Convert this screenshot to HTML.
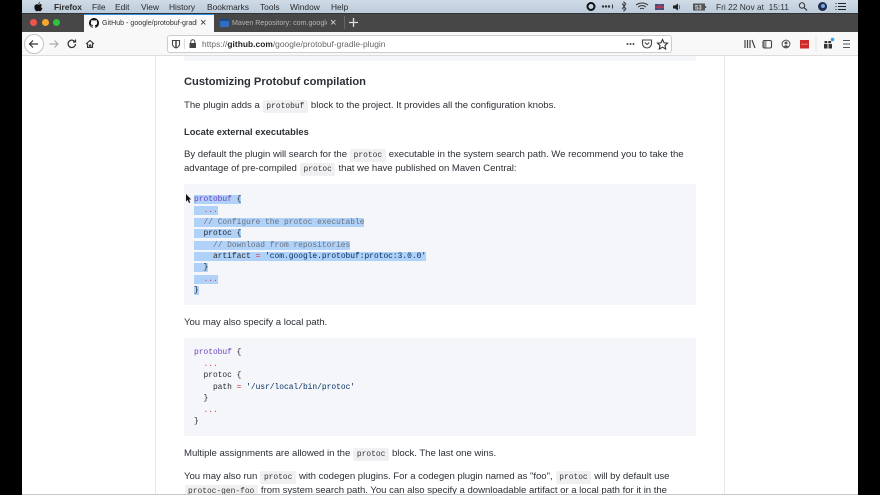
<!DOCTYPE html>
<html><head><meta charset="utf-8">
<style>
html,body{margin:0;padding:0;background:#000;width:880px;height:495px;overflow:hidden}
*{box-sizing:border-box}
#s{position:absolute;left:22px;top:0;width:836px;height:495px;background:#fff;overflow:hidden}
#w{position:absolute;left:-22px;top:0;width:880px;height:495px;filter:blur(.35px)}
.a{position:absolute;white-space:nowrap}
.t{position:absolute;white-space:nowrap;font:9.6px/14px "Liberation Sans",sans-serif;color:#2b3036;letter-spacing:-.03px}
.c{font:7.9px/12px "Liberation Mono",monospace;background:#f0f0f2;border-radius:2px;padding:2px 3.5px;color:#333;margin:0 .5px;letter-spacing:0}
.m{position:absolute;top:1px;font:8.4px/12px "Liberation Sans",sans-serif;color:#2a2a2a;white-space:nowrap}
.l{position:absolute;left:194px;white-space:pre;font:7.9px/11.45px "Liberation Mono",monospace;color:#24292e;height:11.45px}
.h{background:#b0d1f8}
.p{color:#6f42c1}.r{color:#d73a49}.g{color:#6a737d}.b{color:#032f62}
</style></head><body>
<div id="s"><div id="w">
<!-- menu bar -->
<div class="a" style="left:0;top:0;width:880px;height:13px;background:linear-gradient(#cfdbe6,#bccbdb)"></div>
<svg class="a" style="left:34px;top:2px" width="9" height="10" viewBox="0 0 9 10"><path d="M6 0C5.900 1 5.100 1.900 4.300 1.900 4.300 .9 5.100.2 6 0ZM4.400 2.500C5 2.500 5.500 2.100 6.300 2.100 7 2.100 7.600 2.400 8 3 6.700 3.800 6.900 5.700 8.400 6.300 8 7.500 7 9.300 6 9.300 5.400 9.300 5.100 8.900 4.400 8.900 3.700 8.900 3.400 9.300 2.800 9.300 1.700 9.300.4 7.100.4 5.200.4 3.300 1.600 2.200 2.700 2.200 3.400 2.200 3.900 2.500 4.400 2.500Z" fill="#111"/></svg>
<span class="m" style="left:54px;font-weight:bold">Firefox</span>
<span class="m" style="left:92px">File</span>
<span class="m" style="left:115px">Edit</span>
<span class="m" style="left:141px">View</span>
<span class="m" style="left:169px">History</span>
<span class="m" style="left:207px">Bookmarks</span>
<span class="m" style="left:260px">Tools</span>
<span class="m" style="left:290px">Window</span>
<span class="m" style="left:331px">Help</span>
<!-- right menu icons -->
<svg class="a" style="left:585px;top:0" width="280" height="13" viewBox="585 0 280 13">
<circle cx="591" cy="6.500" r="3.500" fill="none" stroke="#111" stroke-width="2"/>
<g fill="#333"><circle cx="603" cy="6.500" r="1.200"/><circle cx="606" cy="6.500" r="1.200"/><circle cx="609" cy="6.500" r="1.200"/><rect x="612" y="4.500" width="1" height="4"/></g>
<path d="M622 3.500L626 9 624 11V2L626 4 622 9" fill="none" stroke="#333" stroke-width=".8"/>
<path d="M636 5Q642 1 648 5M638 7Q642 4 646 7M640 9Q642 7.500 644 9" fill="none" stroke="#333" stroke-width="1"/>
<rect x="655" y="4" width="9" height="6" fill="#3d4f80"/><path d="M655 7H664M659.500 4V10" stroke="#c9334a" stroke-width="1.600"/>
<path d="M673 5.500H675L678 3.500V10.500L675 8.500H673Z" fill="#222"/><path d="M679 5Q680.500 7 679 9" stroke="#444" fill="none" stroke-width=".7"/>
<rect x="693" y="3.500" width="12" height="7" fill="#555"/><rect x="705" y="6" width="1.200" height="2" fill="#555"/><text x="695" y="9.500" font-family="Liberation Sans" font-size="6" font-weight="bold" fill="#ddd">53</text>
<circle cx="802" cy="5.500" r="2.700" fill="none" stroke="#333" stroke-width="1"/><path d="M804 7.500L807 10.500" stroke="#333" stroke-width="1.200"/>
<circle cx="822.500" cy="6.500" r="4.500" fill="#1d2b52"/><circle cx="823" cy="6" r="2" fill="#7aa4dd"/>
<g stroke="#222" stroke-width="1"><path d="M838 3.500H846M838 6.500H846M838 9.500H846"/></g><g fill="#222"><rect x="835.500" y="3" width="1" height="1"/><rect x="835.500" y="6" width="1" height="1"/><rect x="835.500" y="9" width="1" height="1"/></g>
</svg>
<span class="m" style="left:716px;color:#333">Fri 22 Nov at&nbsp; 15:11</span>
<!-- tab bar -->
<div class="a" style="left:0;top:13px;width:880px;height:19px;background:#474747"></div>
<div class="a" style="left:22px;top:13px;width:836px;height:1px;background:#333"></div>
<div class="a" style="left:30px;top:19px;width:7px;height:7px;border-radius:50%;background:#f0524c"></div>
<div class="a" style="left:42px;top:19px;width:7px;height:7px;border-radius:50%;background:#f4a92d"></div>
<div class="a" style="left:53px;top:19px;width:7px;height:7px;border-radius:50%;background:#2fc23f"></div>
<div class="a" style="left:84px;top:14px;width:130px;height:18px;background:#f8f8f9;border-top:1px solid #2a90e8"></div>
<svg class="a" style="left:89px;top:18px" width="10" height="10" viewBox="0 0 16 16"><path fill="#111" d="M8 0C3.580 0 0 3.580 0 8c0 3.540 2.290 6.530 5.470 7.590.4.070.55-.17.55-.38 0-.19-.01-.82-.01-1.490-2.010.37-2.530-.49-2.690-.94-.09-.23-.48-.94-.82-1.130-.28-.15-.68-.52-.01-.53.630-.01 1.080.58 1.230.82.720 1.210 1.870.87 2.330.66.070-.52.280-.87.510-1.070-1.780-.2-3.640-.89-3.640-3.950 0-.87.310-1.590.82-2.150-.08-.2-.36-1.020.08-2.120 0 0 .67-.21 2.200.82.640-.18 1.320-.27 2-.27s1.360.09 2 .27c1.530-1.040 2.200-.82 2.200-.82.440 1.100.16 1.920.08 2.120.51.560.82 1.270.82 2.150 0 3.070-1.870 3.750-3.650 3.950.29.250.54.730.54 1.480 0 1.070-.01 1.930-.01 2.200 0 .21.150.46.550.38A8.010 8.010 0 0016 8c0-4.420-3.580-8-8-8z"/></svg>
<span class="a" style="left:102px;top:17px;width:95px;overflow:hidden;font:7.1px/12px 'Liberation Sans',sans-serif;color:#333">GitHub - google/protobuf-gradle-plugin</span>
<span class="a" style="left:200px;top:16px;font:11px/14px 'Liberation Sans',sans-serif;color:#333">×</span>
<div class="a" style="left:220px;top:19px;width:9px;height:8px;background:#2f6fc0;border-top:2px solid #1b4a8c"></div>
<span class="a" style="left:232px;top:17px;width:95px;overflow:hidden;font:7.1px/12px 'Liberation Sans',sans-serif;color:#b5b5b5">Maven Repository: com.google.protobuf</span>
<span class="a" style="left:330px;top:16px;font:11px/14px 'Liberation Sans',sans-serif;color:#ddd">×</span>
<div class="a" style="left:344px;top:16px;width:1px;height:13px;background:#666"></div>
<svg class="a" style="left:349px;top:18px" width="9" height="9"><path d="M4.500 0V9M0 4.500H9" stroke="#ddd" stroke-width="1.300"/></svg>
<!-- toolbar -->
<div class="a" style="left:22px;top:32px;width:836px;height:24px;background:#f8f8f9;border-bottom:1px solid #ddd"></div>
<div class="a" style="left:24px;top:34px;width:20px;height:20px;border-radius:50%;background:#fff;border:1px solid #c4c4c4"></div>
<svg class="a" style="left:0;top:32px" width="110" height="24" viewBox="0 32 110 24" fill="none">
<path d="M38 44H29.500M33 40.500L29.500 44 33 47.500" stroke="#333" stroke-width="1.200"/>
<path d="M58 44H49.500M54.500 40.500L58 44 54.500 47.500" stroke="#aaa" stroke-width="1.200"/>
<path d="M75.500 44A3.700 3.700 0 1 1 74.500 41.300M75.500 39.500V42H73" stroke="#333" stroke-width="1.200"/>
<path d="M86 44L90 40.500 94 44M87.500 43.500V47.500H92.500V43.500M89.300 47.500V45H90.800V47.500" stroke="#333" stroke-width="1.100"/>
</svg>
<div class="a" style="left:167px;top:35px;width:505px;height:18px;background:#fff;border:1px solid #ccc;border-radius:3px"></div>
<svg class="a" style="left:170px;top:36px" width="40" height="16" viewBox="170 36 40 16" fill="none">
<path d="M172.500 40.500H179.500V44C179.500 46 178 47.300 176 48 174 47.300 172.500 46 172.500 44Z" stroke="#444" stroke-width="1.100"/><path d="M176 41V47.500" stroke="#444" stroke-width="1.500"/>
<path d="M184.500 39V49" stroke="#ddd"/>
<rect x="189.500" y="43" width="6.500" height="5" fill="#444"/><path d="M190.800 43V41.800A2 2 0 0 1 194.800 41.800V43" stroke="#444"/>
</svg>
<span class="a" style="left:202px;top:38px;font:8.400px/12px 'Liberation Sans',sans-serif;color:#666;letter-spacing:.03px">https://<b style="color:#222;font-weight:bold">github.com</b>/google/protobuf-gradle-plugin</span>
<svg class="a" style="left:622px;top:34px" width="230" height="20" viewBox="622 34 230 20" fill="none">
<g fill="#444"><circle cx="627.500" cy="44" r="1"/><circle cx="630.500" cy="44" r="1"/><circle cx="633.500" cy="44" r="1"/></g>
<path d="M642.500 40H651.500V43.500A4.500 4.500 0 0 1 642.500 43.500Z" stroke="#444" stroke-width="1.100"/><path d="M644.800 42.500L647 44.500 649.200 42.500" stroke="#444" stroke-width="1.100"/>
<path d="M662.500 39.500L664 42.800 667.500 43.200 665 45.500 665.700 49 662.500 47.200 659.300 49 660 45.500 657.500 43.200 661 42.800Z" stroke="#333" stroke-width="1.100"/>
<path d="M745 40V48M747.500 40V48M750 40V48M752 40L755 48" stroke="#444" stroke-width="1.200"/>
<rect x="763" y="40.500" width="8.500" height="7.500" rx="1.500" stroke="#444" stroke-width="1.100"/><rect x="763.500" y="41" width="3" height="6.500" fill="#999"/>
<circle cx="786" cy="44" r="3.900" stroke="#555"/><circle cx="786" cy="43" r="1.500" fill="#555"/><path d="M783.300 46.500Q786 44.200 788.700 46.500L786 47.800Z" fill="#555"/>
<rect x="800" y="40" width="9" height="8.500" fill="#cf2a2a"/><path d="M801.500 44.300H807.500" stroke="#f3bcbc" stroke-dasharray="1 .6"/>
<path d="M816 36V52" stroke="#e4e4e4"/>
<rect x="824" y="44" width="3.500" height="4.500" fill="#333"/><rect x="828.500" y="44" width="3.500" height="4.500" fill="#333"/><rect x="824.500" y="41" width="2.800" height="2.200" fill="#333"/><rect x="828.300" y="41" width="2.800" height="2.200" fill="#333"/><circle cx="832.500" cy="39.500" r="1.800" fill="#32a4f0"/>
<path d="M843 40.500H850M843 44H850M843 47.500H850" stroke="#555" stroke-width="1.100"/>
</svg>
<!-- page -->
<div class="a" style="left:22px;top:56px;width:836px;height:439px;background:#fff"></div>
<div class="a" style="left:155px;top:56px;width:570px;height:439px;background:#fff;border-left:1px solid #e6e6e9;border-right:1px solid #e6e6e9"></div>
<div class="a" style="left:184px;top:56px;width:512px;height:5px;background:#f5f6fa"></div>
<div class="t" style="left:184px;top:75px;font-size:11.150px;font-weight:bold;line-height:15px;letter-spacing:0">Customizing Protobuf compilation</div>
<div class="t" style="left:184px;top:99px">The plugin adds a <span class="c">protobuf</span> block to the project. It provides all the configuration knobs.</div>
<div class="t" style="left:184px;top:125px;font-weight:bold;font-size:9.300px;letter-spacing:.03px">Locate external executables</div>
<div class="t" style="left:184px;top:148px">By default the plugin will search for the <span class="c">protoc</span> executable in the system search path. We recommend you to take the</div>
<div class="t" style="left:184px;top:162px">advantage of pre-compiled <span class="c">protoc</span> that we have published on Maven Central:</div>
<div class="a" style="left:184px;top:184px;width:512px;height:121px;background:#f5f6fa"></div>
<div class="l" style="top:193.700px"><span class="h"><span class="p">protobuf</span> {</span></div>
<div class="l" style="top:205.200px"><span class="h">  <span class="r">...</span></span></div>
<div class="l" style="top:216.600px"><span class="h">  <span class="g">// Configure the protoc executable</span></span></div>
<div class="l" style="top:228.100px"><span class="h">  protoc {</span></div>
<div class="l" style="top:239.500px"><span class="h">    <span class="g">// Download from repositories</span></span></div>
<div class="l" style="top:251px"><span class="h">    artifact <span class="r">=</span> <span class="b">'com.google.protobuf:protoc:3.0.0'</span></span></div>
<div class="l" style="top:262.400px"><span class="h">  }</span></div>
<div class="l" style="top:273.900px"><span class="h">  <span class="r">...</span></span></div>
<div class="l" style="top:285.300px"><span class="h">}</span></div>
<svg class="a" style="left:185px;top:194px" width="7" height="10"><path d="M1 0V7.500L2.700 6 4 9 5.200 8.500 4 5.500H6.200Z" fill="#111"/></svg>
<div class="t" style="left:184px;top:316px">You may also specify a local path.</div>
<div class="a" style="left:184px;top:338px;width:512px;height:98px;background:#f5f6fa"></div>
<div class="l" style="top:347.300px"><span class="p">protobuf</span> {</div>
<div class="l" style="top:358.800px">  <span class="r">...</span></div>
<div class="l" style="top:370.200px">  protoc {</div>
<div class="l" style="top:381.700px">    path <span class="r">=</span> <span class="b">'/usr/local/bin/protoc'</span></div>
<div class="l" style="top:393.100px">  }</div>
<div class="l" style="top:404.600px">  <span class="r">...</span></div>
<div class="l" style="top:416px">}</div>
<div class="t" style="left:184px;top:447px">Multiple assignments are allowed in the <span class="c">protoc</span> block. The last one wins.</div>
<div class="t" style="left:184px;top:470px">You may also run <span class="c">protoc</span> with codegen plugins. For a codegen plugin named as "foo", <span class="c">protoc</span> will by default use</div>
<div class="t" style="left:184px;top:484px"><span class="c">protoc-gen-foo</span> from system search path. You can also specify a downloadable artifact or a local path for it in the</div>
<div class="a" style="left:22px;top:494px;width:836px;height:1px;background:#c8c8c8"></div>
</div></div>
</body></html>
